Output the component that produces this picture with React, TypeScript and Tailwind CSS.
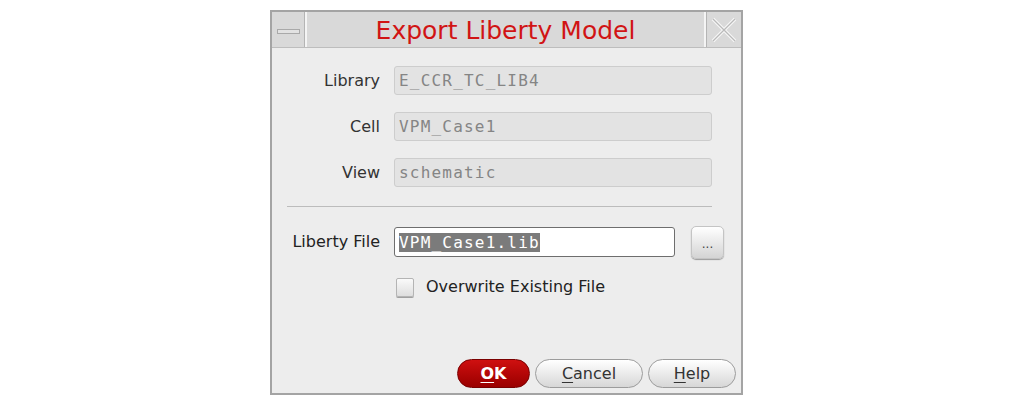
import React from "react";

const fields = [
  { label: "Library", value: "E_CCR_TC_LIB4" },
  { label: "Cell", value: "VPM_Case1" },
  { label: "View", value: "schematic" },
];

const mono = { fontFamily: '"DejaVu Sans Mono", monospace' };

export default function App() {
  return (
    <div className="w-[1013px] h-[406px] bg-white flex justify-center pt-[10px]" style={{ fontFamily: '"DejaVu Sans", sans-serif' }}>
      <div className="w-[473px] h-[385px] border-2 border-[#a4a4a4] bg-[#ededed] flex flex-col">
        {/* title bar */}
        <div className="flex h-[36px] bg-[#d9d9d9] border-b border-[#bdbdbd]">
          <div className="w-[35px] border-r-2 border-[#f4f4f4] flex items-center justify-center shadow-[inset_-1px_0_0_#b4b4b4]">
            <div className="w-[23px] h-[5px] bg-[#e2e2e2] border border-[#a9a9a9] mt-[4px]" />
          </div>
          <div className="flex-1 flex items-center justify-center text-[25px] text-[#d11414] leading-none pt-[2px]">
            Export Liberty Model
          </div>
          <div className="w-[37px] border-l-2 border-[#f4f4f4] shadow-[inset_1px_0_0_#b4b4b4] flex items-center justify-center">
            <svg width="26" height="26" viewBox="0 0 26 26">
              <path d="M2 2 L24 24 M24 2 L2 24" stroke="#f7f7f7" strokeWidth="3.5" />
              <path d="M2 2 L24 24 M24 2 L2 24" stroke="#b9b9b9" strokeWidth="1.2" />
            </svg>
          </div>
        </div>

        {/* body */}
        <div className="flex flex-col pl-[15px] pr-[29px] pt-[18px] flex-1">
          {fields.map((f, i) => (
            <div key={i} className="flex items-center h-[29px] mb-[17px]">
              <div className="w-[93px] shrink-0 text-right text-[16px] text-[#333]">{f.label}</div>
              <div className="ml-[14px] flex-1 h-[29px] bg-[#e3e3e3] border border-[#cdcdcd] rounded-[3px] flex items-center px-[4px] text-[16px] tracking-[1.2px] text-[#858585]" style={mono}>
                {f.value}
              </div>
            </div>
          ))}
          <div className="h-px bg-[#bcbcbc] mt-[2px]" />

          <div className="flex items-center mt-[19px] h-[32px] mr-[-13px]">
            <div className="w-[93px] shrink-0 text-right text-[16px] text-[#222]">Liberty File</div>
            <div className="ml-[14px] shrink-0 w-[281px] h-[30px] bg-white border border-[#6e6e6e] rounded-[3px] flex items-center px-[4px] text-[16px] tracking-[1.2px]" style={mono}>
              <span className="bg-[#7b7b7b] text-white leading-[19px]">VPM_Case1.lib</span>
            </div>
            <div className="ml-[16px] shrink-0 w-[33px] h-[33px] rounded-[5px] border border-[#c4c4c4] bg-gradient-to-b from-[#ffffff] to-[#d4d4d4] shadow-[0_1px_1px_#9a9a9a] flex items-center justify-center text-[12px] text-[#444] leading-none pt-[4px]">
              ...
            </div>
          </div>

          <div className="flex items-center mt-[17px] ml-[109px]">
            <div className="w-[18px] h-[19px] rounded-[2px] border border-[#b4b4b4] bg-gradient-to-b from-[#fafafa] to-[#dedede] shadow-[0_1px_0_#a0a0a0]" />
            <div className="ml-[12px] text-[16px] text-[#222]">Overwrite Existing File</div>
          </div>

          <div className="flex-1" />

          <div className="flex justify-end items-center mb-[5px] mr-[-24px] gap-[5px]">
            <button className="w-[73px] h-[29px] rounded-full bg-gradient-to-b from-[#cf1010] to-[#9a0000] border border-[#7a0000] text-white font-bold text-[16px]">
              <span className="underline underline-offset-[3px]">O</span>K
            </button>
            <button className="w-[108px] h-[29px] rounded-full bg-gradient-to-b from-[#ffffff] to-[#d7d7d7] border border-[#9c9c9c] text-[#333] text-[16px]">
              <span className="underline underline-offset-[3px]">C</span>ancel
            </button>
            <button className="w-[88px] h-[29px] rounded-full bg-gradient-to-b from-[#ffffff] to-[#d7d7d7] border border-[#9c9c9c] text-[#333] text-[16px]">
              <span className="underline underline-offset-[3px]">H</span>elp
            </button>
          </div>
        </div>
      </div>
    </div>
  );
}
